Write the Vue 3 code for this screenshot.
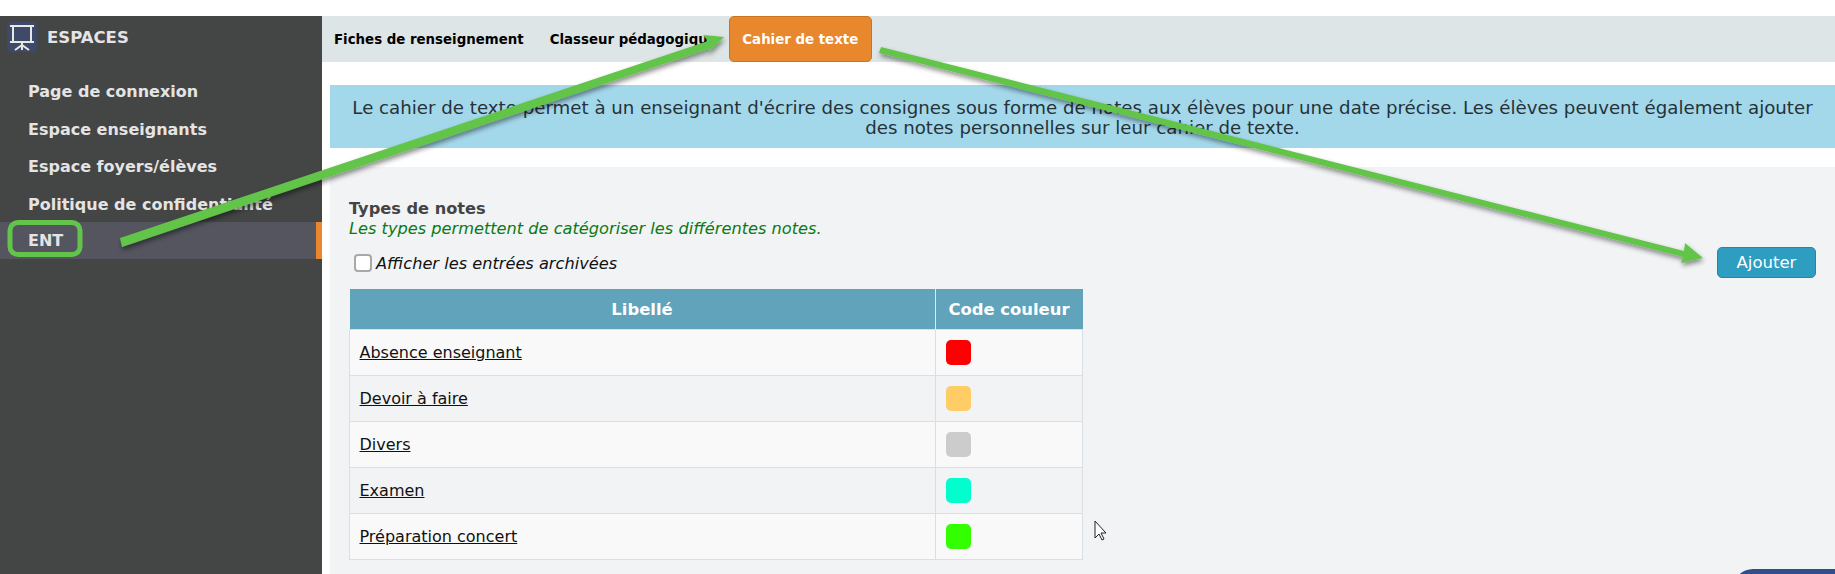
<script setup>
const menu = ['Page de connexion', 'Espace enseignants', 'Espace foyers/élèves', 'Politique de confidentialité', 'ENT']
const tabs = ['Fiches de renseignement', 'Classeur pédagogique']
const rows = [
  { label: 'Absence enseignant', color: '#ff0000' },
  { label: 'Devoir à faire', color: '#ffcc66' },
  { label: 'Divers', color: '#cccccc' },
  { label: 'Examen', color: '#00ffcc' },
  { label: 'Préparation concert', color: '#33ff00' }
]
</script>

<template>
  <div class="page">
    <aside class="side">
      <div class="brand">
        <span class="logo">
          <svg width="30" height="30" viewBox="0 0 30 30">
            <path d="M3 4h24M6 4v16M24 4v16M3 20h24" fill="none" stroke="#e8e8e8" stroke-width="2" />
            <path d="M15 21v7M15 23l-7 5M15 23l7 5" fill="none" stroke="#e8e8e8" stroke-width="2" />
          </svg>
        </span>
        <span>ESPACES</span>
      </div>
      <nav class="menu">
        <a v-for="m in menu" :key="m" class="item" :class="{ on: m === 'ENT' }">{{ m }}</a>
      </nav>
    </aside>
    <main class="main">
      <div class="tabs">
        <a v-for="t in tabs" :key="t" class="tab">{{ t }}</a>
        <a class="tab active">Cahier de texte</a>
      </div>
      <p class="info">Le cahier de texte permet à un enseignant d'écrire des consignes sous forme de notes aux élèves pour une date précise. Les élèves peuvent également ajouter des notes personnelles sur leur cahier de texte.</p>
      <section class="panel">
        <div class="left">
          <h2>Types de notes</h2>
          <p class="sub">Les types permettent de catégoriser les différentes notes.</p>
          <label class="check"><input type="checkbox" /><span>Afficher les entrées archivées</span></label>
          <table>
            <thead><tr><th class="c1">Libellé</th><th class="c2">Code couleur</th></tr></thead>
            <tbody>
              <tr v-for="r in rows" :key="r.label">
                <td><a>{{ r.label }}</a></td>
                <td class="cc"><span class="swatch" :style="{ background: r.color }"></span></td>
              </tr>
            </tbody>
          </table>
        </div>
        <button class="add">Ajouter</button>
      </section>
    </main>

    <svg class="marks" width="1835" height="574" viewBox="0 0 1835 574">
      <defs>
        <filter id="sh" x="-10%" y="-10%" width="120%" height="130%">
          <feDropShadow dx="1" dy="3" stdDeviation="2.5" flood-color="#000" flood-opacity=".45" />
        </filter>
      </defs>
      <rect x="10" y="222.5" width="70" height="32" rx="8" fill="none" stroke="#62c44a" stroke-width="5" />
      <g filter="url(#sh)" fill="#62c44a">
        <polygon points="120,238 708,41 703,35 724,37 706,55 711,48 122,247" />
        <polygon points="881,47 1684,251 1685,243 1703,258 1681,263 1683,257 879,53" />
      </g>
      <path d="M1095 521v17l4-4 3 6 2-1-3-6h5z" fill="#fff" stroke="#222" stroke-width="1" />
    </svg>
    <div class="blob"></div>
  </div>
</template>

<style>
html, body { margin: 0; background: #fff; }
</style>

<style scoped>
.page {
  position: relative;
  display: flex;
  width: 1835px;
  height: 574px;
  padding-top: 16px;
  box-sizing: border-box;
  overflow: hidden;
  font-family: "DejaVu Sans", Verdana, sans-serif;
  font-size: 16px;
  color: #111;
}
.side { width: 322px; flex: none; background: #444545; color: #e4e4e4; }
.brand { display: flex; align-items: center; gap: 10px; height: 30px; padding: 6px 0 0 7px; font-weight: 700; font-size: 16.5px; }
.logo { width: 30px; height: 30px; border-radius: 5px; background: #3e4a68; display: block; }
.logo svg { display: block; }
.menu { display: flex; flex-direction: column; margin-top: 21px; }
.item { display: block; height: 37.5px; line-height: 37.5px; padding-left: 28px; font-weight: 700; font-size: 16px; white-space: nowrap; }
.item.on { background: #54555f; border-right: 6px solid #e8872b; margin-top: -1px; height: 37px; line-height: 38px; }
.main { flex: 1; min-width: 0; }
.tabs { display: flex; height: 46px; background: #dee5e7; padding-left: 12px; }
.tab { font-size: 13.35px; font-weight: 700; color: #000; line-height: 47px; padding-right: 26px; white-space: nowrap; }
.tab.active { box-sizing: border-box; flex: none; width: 143px; padding: 0; margin-left: -14px; text-align: center; color: #fff; background: #e8872b; border: 1px solid #c9741f; border-radius: 5px; line-height: 45px; }
.info { margin: 23px 0 0 8px; height: 63px; box-sizing: border-box; padding: 13px 20px 0; background: #a3d8eb; color: #263238; text-align: center; font-size: 18.2px; line-height: 19.5px; }
.panel { display: flex; justify-content: space-between; align-items: flex-start; margin: 19px 0 0 8px; height: 420px; background: #f1f3f5; padding: 32px 19px 0 19px; box-sizing: border-box; }
h2 { margin: 0; font-size: 16.2px; font-weight: 700; color: #444; line-height: 19px; }
.sub { margin: 0; color: #0a7a12; font-size: 16.2px; font-style: italic; line-height: 21px; }
.check { display: flex; align-items: center; height: 32px; margin-top: 8px; padding-left: 4px; font-size: 16.2px; font-style: italic; }
.check input { appearance: none; box-sizing: border-box; width: 18px; height: 18px; margin: 0 4px 0 1px; background: #fff; border: 2px solid #a8a8a8; border-radius: 4px; }
table { border-collapse: collapse; margin-top: 10px; table-layout: fixed; width: 734px; }
th { height: 40px; background: #60a3bb; color: #fff; font-size: 16.4px; font-weight: 700; padding: 0; border-right: 1px solid #e4e7e9; }
th:last-child { border-right: 0; }
.c1 { width: 585px; }
td { height: 45px; padding: 0 10px 0 9.5px; border: 1px solid #dcdfe1; background: #f9f9f9; box-sizing: content-box; }
td.cc { padding-left: 10.5px; }
tr:nth-child(even) td { background: #f1f3f5; }
td a { color: #111; text-decoration: underline; }
.swatch { display: block; width: 25px; height: 25px; border-radius: 5px; }
.add { width: 99px; height: 31px; margin-top: 48px; background: #2d9dc0; color: #fff; border: 1px solid #2a83a3; border-radius: 5px; font: 16.5px "DejaVu Sans", Verdana, sans-serif; padding: 0; }
.marks { position: absolute; left: 0; top: 0; pointer-events: none; }
.blob { position: absolute; left: 1733px; top: 569px; width: 130px; height: 40px; border-radius: 30px; background: #2f4f8a; }
</style>
